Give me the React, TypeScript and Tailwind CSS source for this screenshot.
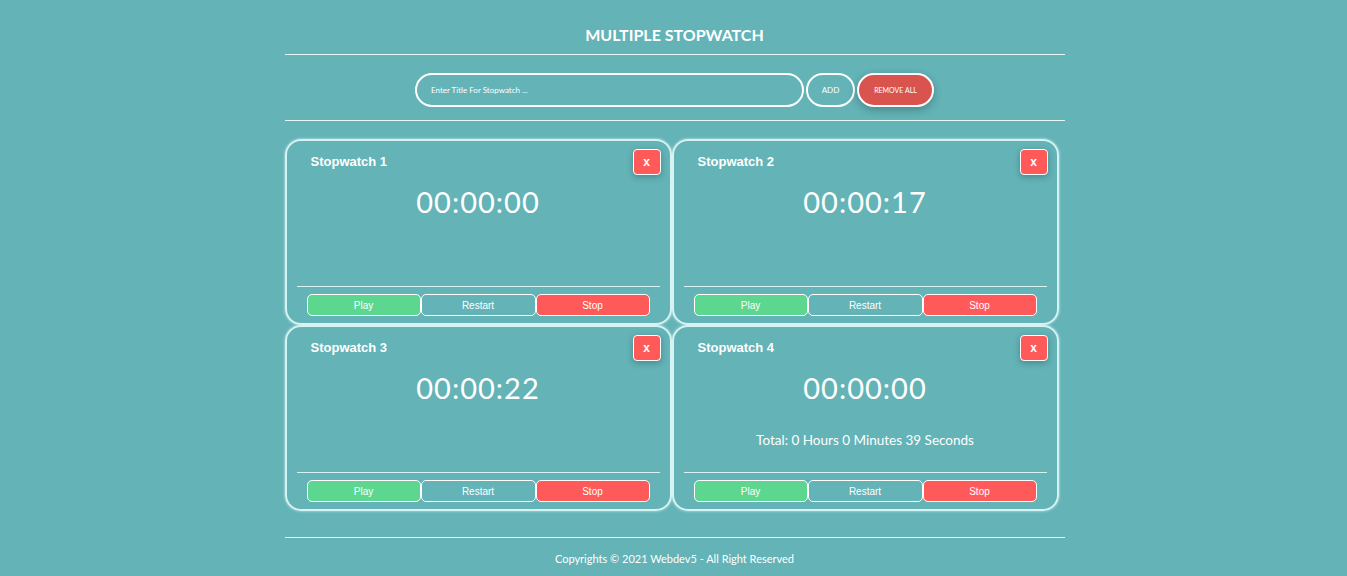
import React from 'react';

type Watch = { id: number; title: string; time: string; total?: string };

const watches: Watch[] = [
  { id: 1, title: 'Stopwatch 1', time: '00:00:00' },
  { id: 2, title: 'Stopwatch 2', time: '00:00:17' },
  { id: 3, title: 'Stopwatch 3', time: '00:00:22' },
  { id: 4, title: 'Stopwatch 4', time: '00:00:00', total: 'Total: 0 Hours 0 Minutes 39 Seconds' },
];

const round = { fontFamily: 'Lato, "Open Sans", sans-serif' };
const arial = { fontFamily: '"Liberation Sans", Arial, sans-serif' };

function StopwatchCard({ w }: { w: Watch }) {
  return (
    <div className="h-[186px] flex flex-col border-2 border-[#d6f2f2] rounded-[16px] shadow-[0_0_3px_rgba(220,250,250,0.8)]">
      <div className="flex items-center justify-between pl-[24px] pr-[9px] mt-[8px] h-[26px]">
        <span className="text-white text-[13px] font-bold" style={arial}>{w.title}</span>
        <button className="w-[28px] h-[26px] bg-[#ff5a5a] border border-white rounded-[4px] text-white text-[12px] font-bold leading-none shadow-[0_2px_6px_rgba(0,0,0,0.25)]" style={arial}>
          x
        </button>
      </div>
      <div className="mt-[9px] text-center text-white text-[29px] leading-[36px] tracking-[1px]" style={round}>
        {w.time}
      </div>
      {w.total && (
        <div className="mt-[25px] text-center text-white text-[13.5px] leading-[18px]" style={round}>
          {w.total}
        </div>
      )}
      <div className="mt-auto mx-[10px] border-t border-[#d6f2f2]" />
      <div className="flex mt-[7px] mb-[7px] px-[20px]">
        <button className="w-[114px] h-[22px] bg-[#5dd690] border border-white rounded-[5px] text-white text-[10px]" style={arial}>Play</button>
        <button className="w-[115px] h-[22px] border border-white rounded-[5px] text-white text-[10px]" style={arial}>Restart</button>
        <button className="w-[114px] h-[22px] bg-[#ff5a5a] border border-white rounded-[5px] text-white text-[10px]" style={arial}>Stop</button>
      </div>
    </div>
  );
}

export default function App() {
  return (
    <div className="min-h-[576px] bg-[#63b3b7] pl-[2px]" style={round}>
      <div className="w-[780px] mx-auto pt-[25px]">
        <h1 className="text-center text-white text-[16px] leading-[20px] font-bold">MULTIPLE STOPWATCH</h1>
        <div className="mt-[9px] border-t border-[#e6f6f6]" />
        <div className="flex justify-center items-center mt-[18px] gap-[2px]">
          <div className="w-[389px] h-[34px] border-2 border-white rounded-full flex items-center pl-[14px]">
            <span className="text-white text-[8px]">Enter Title For Stopwatch ...</span>
          </div>
          <button className="w-[49px] h-[34px] border-2 border-white rounded-full text-white text-[8px]">ADD</button>
          <button className="w-[77px] h-[34px] bg-[#d9534f] border-2 border-white rounded-full text-white text-[7px] shadow-[0_3px_8px_rgba(0,0,0,0.25)]">
            REMOVE ALL
          </button>
        </div>
        <div className="mt-[13px] border-t border-[#e6f6f6]" />
        <div className="grid grid-cols-[387px_387px] mt-[18px]">
          {watches.map(w => (
            <StopwatchCard key={w.id} w={w} />
          ))}
        </div>
        <div className="mt-[26px] border-t border-[#e6f6f6]" />
        <div className="text-center text-white text-[11px] leading-[14px] mt-[14px]">
          Copyrights © 2021 Webdev5 - All Right Reserved
        </div>
      </div>
    </div>
  );
}
